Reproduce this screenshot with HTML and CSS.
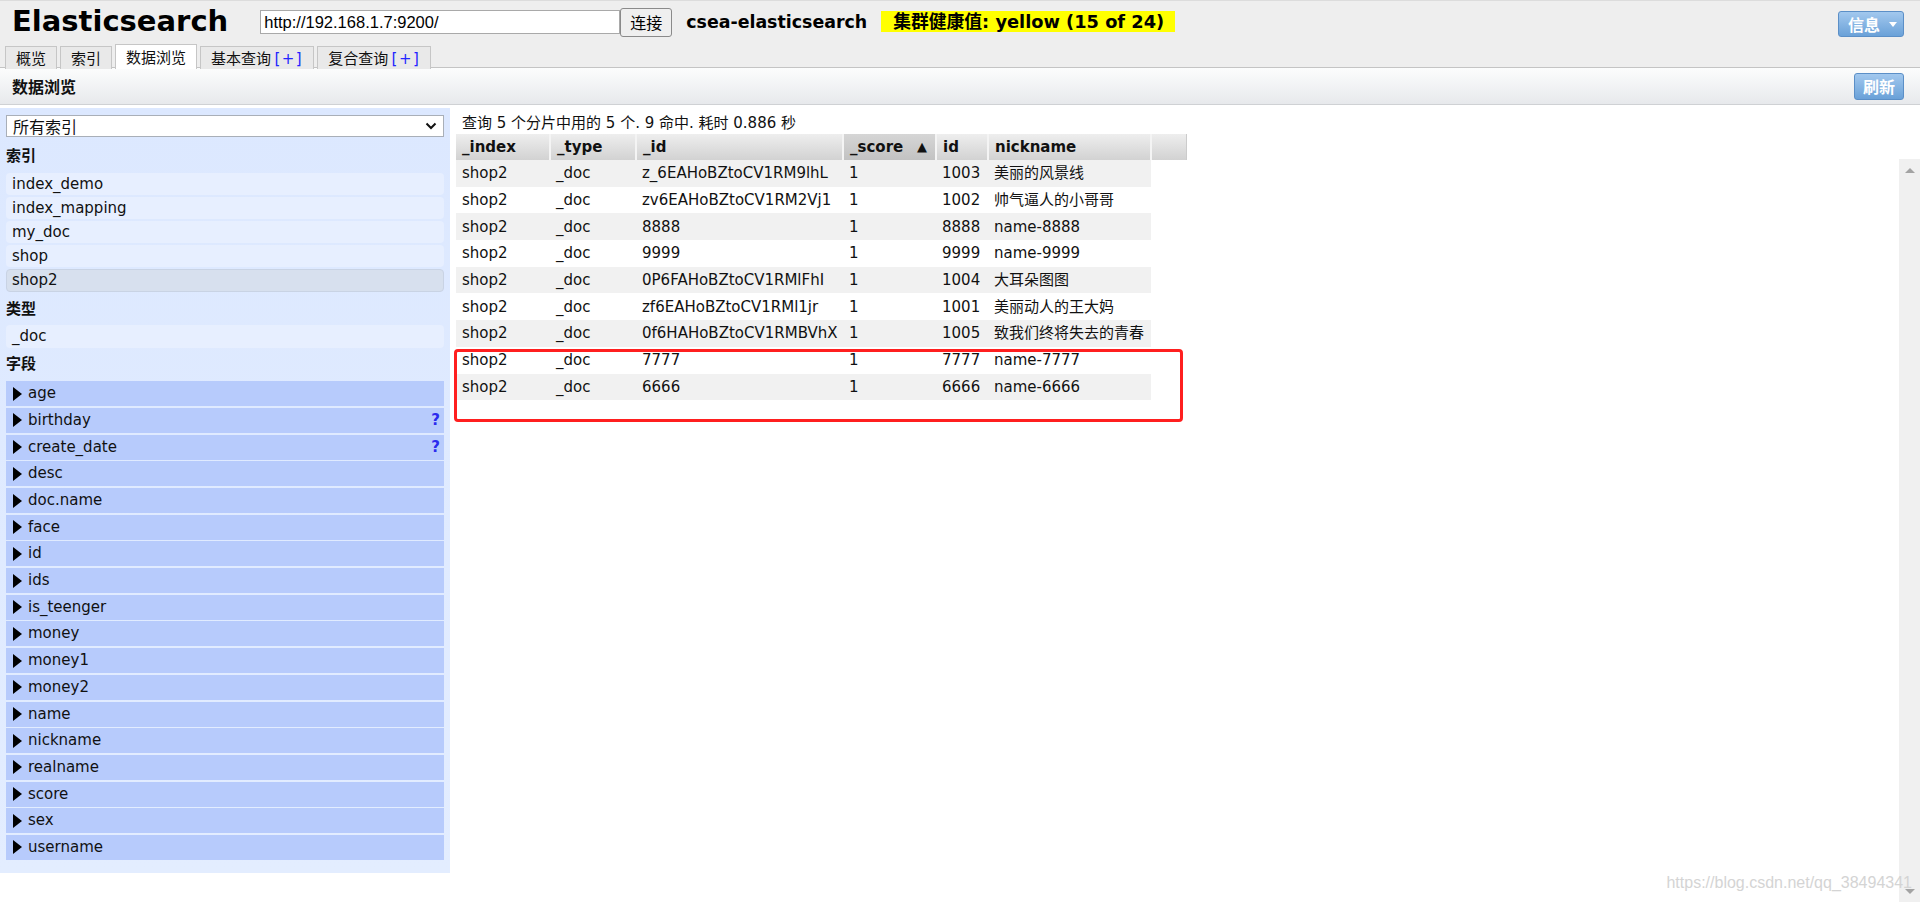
FILE: index.html
```html
<!DOCTYPE html>
<html lang="zh-CN">
<head>
<meta charset="utf-8">
<title>Elasticsearch Head</title>
<link rel="stylesheet" href="styles.css">
</head>
<body>
<div class="app">
  <header class="topbar">
    <div class="topbar-row">
      <h1 class="brand">Elasticsearch</h1>
      <input class="url" type="text" value="http://192.168.1.7:9200/">
      <button class="connect">连接</button>
      <span class="cluster-name">csea-elasticsearch</span>
      <span class="health">集群健康值: yellow (15 of 24)</span>
      <button class="blue-btn info-btn">信息<span class="caret"></span></button>
    </div>
    <nav class="tabs">
      <span class="tab">概览</span>
      <span class="tab">索引</span>
      <span class="tab active">数据浏览</span>
      <span class="tab">基本查询 <span class="plus">[+]</span></span>
      <span class="tab">复合查询 <span class="plus">[+]</span></span>
    </nav>
  </header>

  <div class="subbar">
    <h2 class="subbar-title">数据浏览</h2>
    <button class="blue-btn refresh-btn">刷新</button>
  </div>

  <div class="main">
    <aside class="sidebar">
      <div class="select">所有索引<svg class="chev" width="12" height="8" viewBox="0 0 12 8"><path d="M1.5 1.5 L6 6 L10.5 1.5" fill="none" stroke="#111" stroke-width="2"/></svg></div>
      <div class="side-head">索引</div>
      <ul class="item-list">
        <li class="item">index_demo</li>
        <li class="item">index_mapping</li>
        <li class="item">my_doc</li>
        <li class="item">shop</li>
        <li class="item selected">shop2</li>
      </ul>
      <div class="side-head head-types">类型</div>
      <ul class="item-list">
        <li class="item">_doc</li>
      </ul>
      <div class="side-head head-fields">字段</div>
      <ul class="field-list">
        <li class="field"><span class="tri"></span>age</li>
        <li class="field"><span class="tri"></span>birthday<span class="q">?</span></li>
        <li class="field"><span class="tri"></span>create_date<span class="q">?</span></li>
        <li class="field"><span class="tri"></span>desc</li>
        <li class="field"><span class="tri"></span>doc.name</li>
        <li class="field"><span class="tri"></span>face</li>
        <li class="field"><span class="tri"></span>id</li>
        <li class="field"><span class="tri"></span>ids</li>
        <li class="field"><span class="tri"></span>is_teenger</li>
        <li class="field"><span class="tri"></span>money</li>
        <li class="field"><span class="tri"></span>money1</li>
        <li class="field"><span class="tri"></span>money2</li>
        <li class="field"><span class="tri"></span>name</li>
        <li class="field"><span class="tri"></span>nickname</li>
        <li class="field"><span class="tri"></span>realname</li>
        <li class="field"><span class="tri"></span>score</li>
        <li class="field"><span class="tri"></span>sex</li>
        <li class="field"><span class="tri"></span>username</li>
      </ul>
    </aside>

    <section class="results">
      <div class="summary">查询 5 个分片中用的 5 个. 9 命中. 耗时 0.886 秒</div>
      <div class="table-wrap">
        <table class="grid">
          <colgroup>
            <col class="c-index"><col class="c-type"><col class="c-id"><col class="c-score"><col class="c-num"><col class="c-nick"><col class="c-extra">
          </colgroup>
          <thead>
            <tr>
              <th>_index</th><th>_type</th><th>_id</th><th class="sorted">_score<span class="arrow">▲</span></th><th>id</th><th>nickname</th><th class="extra"></th>
            </tr>
          </thead>
          <tbody>
            <tr><td>shop2</td><td>_doc</td><td>z_6EAHoBZtoCV1RM9lhL</td><td>1</td><td>1003</td><td>美丽的风景线</td></tr>
            <tr><td>shop2</td><td>_doc</td><td>zv6EAHoBZtoCV1RM2Vj1</td><td>1</td><td>1002</td><td>帅气逼人的小哥哥</td></tr>
            <tr><td>shop2</td><td>_doc</td><td>8888</td><td>1</td><td>8888</td><td>name-8888</td></tr>
            <tr><td>shop2</td><td>_doc</td><td>9999</td><td>1</td><td>9999</td><td>name-9999</td></tr>
            <tr><td>shop2</td><td>_doc</td><td>0P6FAHoBZtoCV1RMlFhI</td><td>1</td><td>1004</td><td>大耳朵图图</td></tr>
            <tr><td>shop2</td><td>_doc</td><td>zf6EAHoBZtoCV1RMl1jr</td><td>1</td><td>1001</td><td>美丽动人的王大妈</td></tr>
            <tr><td>shop2</td><td>_doc</td><td>0f6HAHoBZtoCV1RMBVhX</td><td>1</td><td>1005</td><td>致我们终将失去的青春</td></tr>
            <tr><td>shop2</td><td>_doc</td><td>7777</td><td>1</td><td>7777</td><td>name-7777</td></tr>
            <tr><td>shop2</td><td>_doc</td><td>6666</td><td>1</td><td>6666</td><td>name-6666</td></tr>
          </tbody>
        </table>
        <div class="highlight"></div>
      </div>
    </section>
  </div>

  <div class="vscroll"><span class="up"></span><span class="down"></span></div>
  <div class="watermark">https://blog.csdn.net/qq_38494341</div>
</div>
</body>
</html>
```

FILE: styles.css
```css
* { box-sizing: border-box; }
html, body { margin: 0; padding: 0; }
body {
  width: 1920px;
  height: 902px;
  overflow: hidden;
  background: #fff;
  color: #111;
  font-family: "DejaVu Sans", "Noto Sans CJK SC", sans-serif;
  font-size: 15px;
}
.app { position: relative; width: 1920px; height: 902px; }

/* ---------- top bar ---------- */
.topbar {
  background: #eeeeee;
  border-top: 1px solid #dcdcdc;
  border-bottom: 1px solid #c4c4c4;
  height: 68px;
}
.topbar-row {
  display: flex;
  align-items: center;
  height: 42px;
  padding-left: 12px;
  padding-right: 16px;
}
.brand {
  margin: 0 32px 0 0;
  font-family: "DejaVu Sans", sans-serif;
  font-weight: bold;
  font-size: 29px;
  line-height: 32px;
  color: #000;
  position: relative;
  top: -1px;
}
.url {
  width: 360px;
  height: 24px;
  margin: 0;
  padding: 0 3px;
  border: 1px solid #a9a9a9;
  background: #fff;
  font-family: "Liberation Sans", Arial, sans-serif;
  font-size: 16.5px;
  color: #000;
  outline: none;
}
.connect {
  width: 52px;
  height: 29px;
  margin: 0;
  padding: 0;
  border: 1px solid #8a8a8a;
  border-radius: 3px;
  background: #efefef;
  font-family: "Noto Sans CJK SC", sans-serif;
  font-size: 16px;
  line-height: 27px;
  color: #000;
}
.cluster-name {
  margin-left: 14px;
  font-weight: bold;
  font-size: 17.4px;
  line-height: 22px;
  color: #000;
}
.health {
  margin-left: 14px;
  height: 21px;
  padding: 0 11px 0 12px;
  background: #ffff00;
  font-weight: bold;
  font-size: 17.8px;
  line-height: 21px;
  color: #000;
  position: relative;
  top: -1px;
}
.blue-btn {
  border: 1px solid #5b8fc7;
  border-radius: 3px;
  background: linear-gradient(#a2c8ee, #6aa1d8);
  color: #fff;
  font-family: "Noto Sans CJK SC", sans-serif;
  font-weight: bold;
  font-size: 16px;
  padding: 0;
  margin: 0;
}
.info-btn {
  margin-left: auto;
  width: 66px;
  height: 26px;
  line-height: 24px;
  display: flex;
  align-items: center;
  justify-content: center;
  gap: 9px;
  padding-left: 3px;
  position: relative;
  top: 2px;
}
.caret {
  width: 0; height: 0;
  border-left: 4.5px solid transparent;
  border-right: 4.5px solid transparent;
  border-top: 5px solid #fff;
}

/* ---------- tabs ---------- */
.tabs {
  display: flex;
  align-items: flex-end;
  gap: 3px;
  height: 24px;
  padding-left: 5px;
  margin-top: 1px;
}
.tab {
  height: 23px;
  padding: 0 10px;
  border: 1px solid #c6c6c6;
  border-bottom: none;
  background: #e9e9e9;
  font-family: "Noto Sans CJK SC", sans-serif;
  font-size: 15px;
  line-height: 22px;
  color: #111;
  white-space: nowrap;
  position: relative;
  top: 1px;
}
.tab.active {
  background: #fff;
  height: 25px;
  line-height: 24px;
}
.plus {
  color: #2424ff;
  font-family: "DejaVu Sans", sans-serif;
  font-size: 15px;
  letter-spacing: 1.5px;
}

/* ---------- sub bar ---------- */
.subbar {
  display: flex;
  align-items: center;
  height: 37px;
  padding: 0 16px 0 12px;
  background: linear-gradient(#fcfdfd, #e7e9ec);
  border-bottom: 1px solid #cfd1d4;
}
.subbar-title {
  margin: 0;
  font-family: "Noto Sans CJK SC", sans-serif;
  font-weight: bold;
  font-size: 16px;
  line-height: 22px;
  color: #111;
}
.refresh-btn {
  margin-left: auto;
  width: 50px;
  height: 27px;
  line-height: 25px;
}

/* ---------- main ---------- */
.main {
  display: flex;
  align-items: flex-start;
  gap: 6px;
}
.sidebar {
  width: 450px;
  margin-top: 3px;
  padding: 7px 6px 13px 6px;
  background: linear-gradient(#dce8ff, #e3edff);
}
.select {
  position: relative;
  height: 22px;
  border: 1px solid #a9afb8;
  background: #fff;
  padding-left: 6px;
  font-family: "Noto Sans CJK SC", sans-serif;
  font-size: 16px;
  line-height: 20px;
  color: #111;
}
.chev { position: absolute; right: 6px; top: 6px; }
.side-head {
  margin-top: 6px;
  height: 24px;
  line-height: 24px;
  font-family: "Noto Sans CJK SC", sans-serif;
  font-weight: bold;
  font-size: 15px;
  color: #111;
}
.item-list, .field-list {
  list-style: none;
  margin: 5.5px 0 0 0;
  padding: 0;
}
.field-list { margin-top: 6.4px; }
.item {
  height: 22.4px;
  margin-bottom: 1.8px;
  padding-left: 6px;
  border-radius: 4px;
  background: #e7efff;
  line-height: 22px;
  font-size: 15px;
  color: #111;
}
.item.selected {
  background: #d7e0ee;
  border: 1px solid #c9d3e4;
  padding-left: 5px;
  line-height: 20px;
}
.head-types { margin-top: 4.2px; }
.head-fields { margin-top: 3.2px; }
.field {
  display: flex;
  align-items: center;
  height: 25px;
  margin-bottom: 1.7px;
  padding-left: 7px;
  padding-right: 4px;
  background: #b7cbfc;
  font-size: 15px;
  line-height: 25px;
  color: #111;
}
.field:last-child { margin-bottom: 0; }
.tri {
  width: 0; height: 0;
  border-top: 7px solid transparent;
  border-bottom: 7px solid transparent;
  border-left: 9px solid #000;
  margin-right: 6px;
}
.q {
  margin-left: auto;
  color: #2b2bee;
  font-weight: bold;
  font-size: 15px;
}

/* ---------- results ---------- */
.results {
  padding-top: 8px;
}
.summary {
  height: 20px;
  line-height: 20px;
  padding-left: 6px;
  font-size: 15px;
  color: #111;
  white-space: nowrap;
}
.table-wrap { position: relative; margin-top: 1px; }
.grid {
  border-collapse: collapse;
  table-layout: fixed;
  width: 730px;
}
.c-index { width: 94px; }
.c-type { width: 86px; }
.c-id { width: 207px; }
.c-score { width: 93px; }
.c-num { width: 52px; }
.c-nick { width: 163px; }
.c-extra { width: 35px; }
.grid th {
  height: 26px;
  padding: 0 6px;
  text-align: left;
  font-weight: bold;
  font-size: 15px;
  line-height: 24px;
  color: #111;
  background: linear-gradient(#eeeeee, #d2d2d2);
  border-right: 2px solid #f4f4f4;
  white-space: nowrap;
  overflow: hidden;
}
.grid th.sorted { background: linear-gradient(#d6d6d6, #c2c2c2); }
.grid th.extra { border-right: 1px solid #ccc; }
.arrow {
  float: right;
  font-size: 13px;
  margin-right: 2px;
}
.grid td {
  height: 26.7px;
  padding: 0 6px;
  font-size: 15px;
  line-height: 20px;
  color: #111;
  white-space: nowrap;
  overflow: hidden;
}
.grid tbody tr:nth-child(odd) td { background: #f1f1f1; }
.grid tbody tr:nth-child(even) td { background: #fff; }
.highlight {
  position: absolute;
  left: -2px;
  top: 215px;
  width: 729px;
  height: 73px;
  border: 3px solid #ff1f1f;
  border-radius: 4px;
  pointer-events: none;
}

/* ---------- scrollbar & watermark ---------- */
.vscroll {
  position: absolute;
  right: 0;
  top: 159px;
  bottom: 0;
  width: 21px;
  background: #f0f0f0;
}
.vscroll .up, .vscroll .down {
  position: absolute;
  left: 6px;
  width: 0; height: 0;
  border-left: 5px solid transparent;
  border-right: 5px solid transparent;
}
.vscroll .up { top: 9px; border-bottom: 5px solid #a3a3a3; }
.vscroll .down { bottom: 8px; border-top: 5px solid #a3a3a3; }
.watermark {
  position: absolute;
  right: 8px;
  bottom: 9px;
  font-family: "Liberation Sans", Arial, sans-serif;
  font-size: 16px;
  line-height: 20px;
  color: #d4d4d4;
}
```
